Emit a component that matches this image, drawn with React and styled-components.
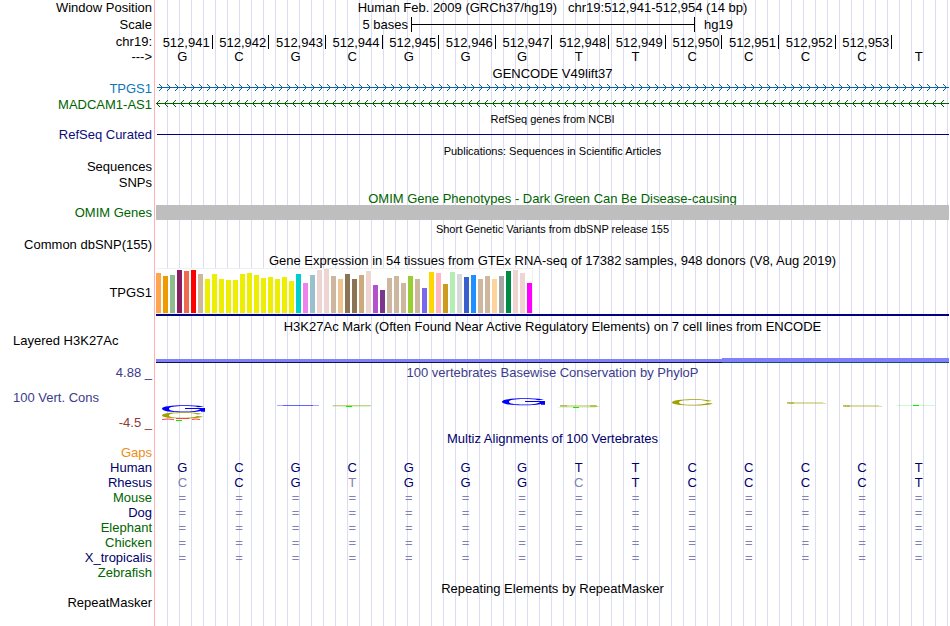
import React from "react";
import styled, { createGlobalStyle } from "styled-components";

const GlobalStyle = createGlobalStyle`
  body {
    margin: 0;
    background: #fff;
    font-family: "Liberation Sans", Arial, Helvetica, sans-serif;
    font-size: 13px;
    line-height: 15px;
    color: #000;
  }
`;

const Browser = styled.main`
  box-sizing: border-box;
  min-height: 100vh;
  padding-right: 1px;
  overflow: hidden;
  background:
    linear-gradient(#ffb0b0, #ffb0b0) 154px 0 / 1px 100% no-repeat,
    repeating-linear-gradient(to right, #dcdcf5 0 1px, transparent 1px 12px) 167px 0 / 100% 100% no-repeat;
`;

const Row = styled.section`
  display: grid;
  grid-template-columns: 152px minmax(0, 1fr);
  grid-template-rows: 100%;
  column-gap: 4px;
  align-items: ${(p) => p.$align || "center"};
  height: ${(p) => p.$h}px;
  margin-top: ${(p) => p.$gap || 0}px;
`;

const Label = styled.span`
  grid-column: 1;
  text-align: right;
  white-space: nowrap;
  color: ${(p) => p.$color || "#000"};
`;

const WideLabel = styled(Label)`
  text-align: left;
  padding-left: 13px;
`;

const AxisLabels = styled.div`
  display: flex;
  flex-direction: column;
  justify-content: space-between;
  height: 65px;
`;

const Title = styled.h2`
  grid-column: 2;
  margin: 0;
  text-align: center;
  font-weight: normal;
  white-space: pre;
  font-size: ${(p) => (p.$small ? 11 : 13)}px;
  line-height: ${(p) => (p.$small ? 17 : 15)}px;
  color: ${(p) => p.$color || "#000"};
`;

const Scale = styled.div`
  display: grid;
  grid-template-columns: 255fr 284fr 254fr;
  align-items: center;
`;

const ScaleStart = styled.span`
  text-align: right;
  padding-right: 3px;
`;

const ScaleEnd = styled.span`
  padding-left: 9px;
`;

const Bracket = styled.div`
  display: flex;
  align-items: center;
  height: 15px;
  border: solid #000;
  border-width: 0 1px;
`;

const BracketLine = styled.div`
  flex: 1;
  height: 1px;
  background: #000;
`;

const Bases = styled.div`
  display: grid;
  grid-template-columns: repeat(14, minmax(0, 1fr));
`;

const Tick = styled.span`
  height: 14px;
  line-height: 15px;
  text-align: right;
  padding-right: 2px;
  white-space: nowrap;
  border-right: 1px solid ${(p) => (p.$last ? "transparent" : "#000")};
`;

const Base = styled.span`
  text-align: center;
  padding-right: 4px;
  color: ${(p) => p.$color};
`;

const Strand = styled.svg`
  display: block;
  width: 100%;
  height: 8px;
`;

const Line = styled.div`
  height: 1px;
  margin-left: 1px;
  background: #000080;
`;

const OmimBar = styled.div`
  height: 15px;
  background: #bebebe;
`;

const Expression = styled.div`
  align-self: stretch;
  border-bottom: 2px solid #000080;
`;

const BarPlot = styled.div`
  box-sizing: border-box;
  display: flex;
  align-items: flex-end;
  gap: 2px;
  width: max-content;
  height: 46px;
  border: solid #f0f0f0;
  border-width: 1px 1px 1px 0;
  background: #fff;
`;

const Bar = styled.div`
  width: 5px;
`;

const Signal = styled.div`
  display: flex;
  align-items: flex-end;
  align-self: end;
`;

const SignalPart = styled.div`
  flex: ${(p) => p.$grow};
  height: ${(p) => p.$h}px;
  background: #8080ff;
  border-bottom: 1px solid ${(p) => p.$base};
`;

const Conservation = styled.div`
  display: flex;
  flex-direction: column;
`;

const Logos = styled.svg`
  display: block;
  width: 100%;
  height: 50px;
`;

const NAVY = "#00006b";
const GREEN = "#006400";
const FADED = "#8080b5";
const SEQUENCE = "GCGCGGGTTCCCCT";

const EXPRESSION = [
  [40, "#ffa54f"], [37, "#ee9a00"], [38, "#8fbc8f"], [43, "#8b1c62"], [42, "#ee6a50"], [43, "#ff0000"],
  [39, "#cdb79e"], [34, "#eeee00"], [39, "#eeee00"], [34, "#eeee00"], [33, "#eeee00"], [33, "#eeee00"],
  [39, "#eeee00"], [40, "#eeee00"], [38, "#eeee00"], [35, "#eeee00"], [36, "#eeee00"], [34, "#eeee00"],
  [36, "#eeee00"], [32, "#eeee00"], [39, "#00cdcd"], [30, "#ee82ee"], [38, "#9ac0cd"], [43, "#eed5d2"],
  [44, "#eed5d2"], [37, "#cdb79e"], [34, "#eec591"], [39, "#8b7355"], [34, "#8b7355"], [38, "#cdaa7d"],
  [42, "#eed5d2"], [28, "#b452cd"], [23, "#7a378b"], [35, "#cdb79e"], [37, "#cdb79e"], [30, "#cdb79e"],
  [37, "#9acd32"], [34, "#cdb79e"], [25, "#7a67ee"], [41, "#ffd700"], [40, "#ffb6c1"], [29, "#cd9b1d"],
  [41, "#b4eeb4"], [39, "#d9d9d9"], [36, "#3a5fcd"], [38, "#1e90ff"], [34, "#cdb79e"], [37, "#cdb79e"],
  [34, "#ffd39b"], [37, "#a6a6a6"], [42, "#008b45"], [43, "#eed5d2"], [40, "#eed5d2"], [30, "#ff00ff"],
];

const SPECIES = [
  ["Human", NAVY, SEQUENCE],
  ["Rhesus", NAVY, "cCGtGGGcTCCCCT"],
  ["Mouse", GREEN, "=============="],
  ["Dog", NAVY, "=============="],
  ["Elephant", GREEN, "=============="],
  ["Chicken", GREEN, "=============="],
  ["X_tropicalis", NAVY, "=============="],
  ["Zebrafish", GREEN, ""],
];

function Arrows({ id, color, left }) {
  return (
    <Strand aria-hidden="true" shapeRendering="crispEdges">
      <defs>
        <pattern id={id} width="8" height="8" patternUnits="userSpaceOnUse" x={left ? 0 : 3}>
          <path
            d={
              left
                ? "M3 0h1v1h-1zM2 1h1v1h-1zM1 2h1v1h-1zM1 4h1v1h-1zM2 5h1v1h-1zM3 6h1v1h-1z"
                : "M0 0h1v1h-1zM1 1h1v1h-1zM2 2h1v1h-1zM2 4h1v1h-1zM1 5h1v1h-1zM0 6h1v1h-1z"
            }
            fill={color}
          />
        </pattern>
      </defs>
      <rect width="100%" height="8" fill={`url(#${id})`} />
      <rect x={left ? 0 : 1} y="3" width="100%" height="1" fill={color} />
    </Strand>
  );
}

const RING_G = "M43 1.5C36 .5 29 .3 23 .3C10 .3 1 1.5 1 3.7C1 6 10 7.3 23 7.3C31 7.3 37 6.8 40 6V6.8H44V3.1H24V3.9H39C38 5.5 31 6.5 23 6.5C13 6.5 8 5.5 8 3.7C8 2 14 1.1 23 1.1C29 1.1 34 1.4 37 2.2Z";
const RING_C = "M41 2C37 .8 31 .3 23 .3C10 .3 1 1.5 1 3.5C1 5.5 10 6.5 23 6.5C32 6.5 39 5.8 42 4.4L36 4C34 5.2 30 5.7 23 5.7C13 5.7 8 4.9 8 3.4C8 1.9 13 1.1 23 1.1C30 1.1 34 1.6 36 2.4Z";

function ConservationLogos() {
  return (
    <Logos viewBox="0 0 793 50" preserveAspectRatio="none" role="img" aria-label="Conservation scores">
      <path transform="translate(5 25)" d={RING_G} fill="#0000ff" />
      <path transform="translate(5 32)" d={RING_C} fill="#a0a000" />
      <path d="M6 39.5Q12 38.5 18 39.5M20 38.5H33M36 39.5Q40 38.5 44 39.5" stroke="#ff4040" fill="none" />
      <path d="M20 40.5H26" stroke="#00f000" />
      <path d="M121 25.5H163" stroke="#0000ff" opacity=".35" />
      <path d="M127 25.5H157" stroke="#0000ff" opacity=".4" />
      <path d="M177 25.5H215" stroke="#a0a000" opacity=".5" />
      <path d="M176 26.5H214" stroke="#00f000" opacity=".2" />
      <path d="M190 26.5H196" stroke="#00f000" />
      <path transform="translate(345 18)" d={RING_G} fill="#0000ff" />
      <path d="M404 25.5H440M410 26.5H443" stroke="#a0a000" opacity=".35" />
      <path d="M404 26H411M434 26H441" stroke="#a0a000" strokeWidth="2" opacity=".5" />
      <path d="M417 27.5H423" stroke="#00f000" />
      <path d="M402 27.5H440" stroke="#00f000" opacity=".15" />
      <path transform="translate(515 19)" d={RING_C} fill="#a0a000" />
      <path d="M631 22.5H667M633 23.5H670" stroke="#a0a000" opacity=".35" />
      <path d="M631 23H638" stroke="#a0a000" strokeWidth="2" opacity=".5" />
      <path d="M687 25.5H723M689 26.5H726" stroke="#a0a000" opacity=".35" />
      <path d="M687 26H694" stroke="#a0a000" strokeWidth="2" opacity=".5" />
      <path d="M741 25.5H779" stroke="#00f000" opacity=".2" />
      <path d="M757 25.5H763" stroke="#00f000" />
    </Logos>
  );
}

function BaseRow({ text, color }) {
  return (
    <Bases>
      {[...text].map((c, i) => (
        <Base key={i} $color={color && (c === "=" || c !== c.toUpperCase()) ? FADED : color}>
          {c.toUpperCase()}
        </Base>
      ))}
    </Bases>
  );
}

export default function App() {
  return (
    <>
      <GlobalStyle />
      <Browser>
        <Row $h={15}>
          <Label>Window Position</Label>
          <Title>{"Human Feb. 2009 (GRCh37/hg19)   chr19:512,941-512,954 (14 bp)"}</Title>
        </Row>
        <Row $h={15} $gap={2}>
          <Label>Scale</Label>
          <Scale>
            <ScaleStart>5 bases</ScaleStart>
            <Bracket><BracketLine /></Bracket>
            <ScaleEnd>hg19</ScaleEnd>
          </Scale>
        </Row>
        <Row $h={15} $gap={2}>
          <Label>chr19:</Label>
          <Bases>
            {[...SEQUENCE].map((_, i) => (
              <Tick key={i} $last={i === 13}>{i < 13 ? `512,${941 + i}` : ""}</Tick>
            ))}
          </Bases>
        </Row>
        <Row $h={15}>
          <Label>---&gt;</Label>
          <BaseRow text={SEQUENCE} />
        </Row>
        <Row $h={14} $gap={2}><Title>GENCODE V49lift37</Title></Row>
        <Row $h={16}>
          <Label $color="#0c78b8">TPGS1</Label>
          <Arrows id="forward" color="#0c63a0" />
        </Row>
        <Row $h={16}>
          <Label $color={GREEN}>MADCAM1-AS1</Label>
          <Arrows id="reverse" color="#006400" left />
        </Row>
        <Row $h={15}><Title $small>RefSeq genes from NCBI</Title></Row>
        <Row $h={15}>
          <Label $color="#0c0c78">RefSeq Curated</Label>
          <Line />
        </Row>
        <Row $h={15} $gap={2}><Title $small>Publications: Sequences in Scientific Articles</Title></Row>
        <Row $h={15}><Label>Sequences</Label></Row>
        <Row $h={15} $gap={1}><Label>SNPs</Label></Row>
        <Row $h={13} $gap={2}><Title $color={GREEN}>OMIM Gene Phenotypes - Dark Green Can Be Disease-causing</Title></Row>
        <Row $h={15}>
          <Label $color={GREEN}>OMIM Genes</Label>
          <OmimBar />
        </Row>
        <Row $h={17} $gap={1}><Title $small>Short Genetic Variants from dbSNP release 155</Title></Row>
        <Row $h={13}><Label>Common dbSNP(155)</Label></Row>
        <Row $h={15} $gap={2}><Title>Gene Expression in 54 tissues from GTEx RNA-seq of 17382 samples, 948 donors (V8, Aug 2019)</Title></Row>
        <Row $h={48}>
          <Label>TPGS1</Label>
          <Expression>
            <BarPlot>
              {EXPRESSION.map(([h, color], i) => (
                <Bar key={i} style={{ height: h, background: color }} />
              ))}
            </BarPlot>
          </Expression>
        </Row>
        <Row $h={14} $gap={3}><Title>H3K27Ac Mark (Often Found Near Active Regulatory Elements) on 7 cell lines from ENCODE</Title></Row>
        <Row $h={30} $align="start">
          <WideLabel>Layered H3K27Ac</WideLabel>
          <Signal>
            <SignalPart $grow={10} $h={3} $base="#101050" />
            <SignalPart $grow={4} $h={4} $base="#105070" />
          </Signal>
        </Row>
        <Row $h={66} $gap={2} $align="start">
          <AxisLabels>
            <Label $color="#3c3c8c">4.88 _</Label>
            <WideLabel $color="#3c3c8c">100 Vert. Cons</WideLabel>
            <Label $color="#8c3c3c">-4.5 _</Label>
          </AxisLabels>
          <Conservation>
            <Title $color="#3c3c8c">100 vertebrates Basewise Conservation by PhyloP</Title>
            <ConservationLogos />
          </Conservation>
        </Row>
        <Row $h={14}><Title $color={NAVY}>Multiz Alignments of 100 Vertebrates</Title></Row>
        <Row $h={15}><Label $color="#ec8c14">Gaps</Label></Row>
        {SPECIES.map(([name, color, text]) => (
          <Row key={name} $h={15}>
            <Label $color={color}>{name}</Label>
            <BaseRow text={text} color={NAVY} />
          </Row>
        ))}
        <Row $h={15} $gap={1}><Title>Repeating Elements by RepeatMasker</Title></Row>
        <Row $h={13}><Label>RepeatMasker</Label></Row>
      </Browser>
    </>
  );
}
